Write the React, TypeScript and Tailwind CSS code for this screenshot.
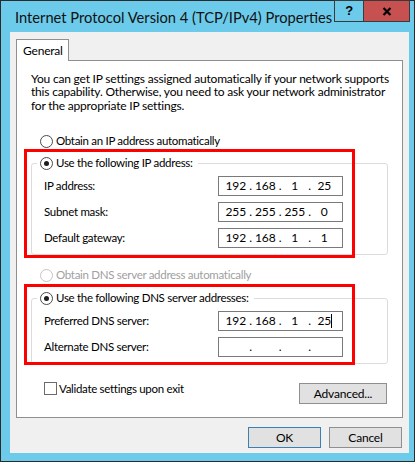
import React from 'react'

function Radio({ checked, disabled }: { checked?: boolean; disabled?: boolean }) {
  return (
    <span
      className={`flex h-[13px] w-[13px] shrink-0 items-center justify-center rounded-full border bg-white ${
        disabled ? 'border-[#c4c4c4]' : 'border-[#4a4a4a]'
      }`}
    >
      {checked && <span className="h-[5px] w-[5px] rounded-full bg-[#1c1c1c]" />}
    </span>
  )
}

function IpBox({ value, caret }: { value?: string[]; caret?: boolean }) {
  const parts = value ?? ['', '', '', '']
  return (
    <div className="flex h-[20px] w-[125px] items-center border border-[#7a7a7a] bg-white pl-[5px] text-[12px] tracking-[-0.2px]">
      {parts.map((p, i) => (
        <React.Fragment key={i}>
          <span className="relative w-[23.5px] text-center">
            {p}
            {caret && i === 3 && <span className="absolute right-[4px] top-[1px] h-[14px] w-px bg-black" />}
          </span>
          {i < 3 && <span className="w-[6px] text-center">.</span>}
        </React.Fragment>
      ))}
    </div>
  )
}

function Row({ label, children }: { label: string; children: React.ReactNode }) {
  return (
    <div className="flex h-[20px] items-center">
      <span className="w-[174px]">{label}</span>
      {children}
    </div>
  )
}

function Btn({ children, primary, className = '' }: { children: React.ReactNode; primary?: boolean; className?: string }) {
  return (
    <div
      className={`flex h-[21px] items-center justify-center border bg-[#e1e1e1] ${
        primary ? 'border-[#3c7fb1]' : 'border-[#8f8f8f]'
      } ${className}`}
    >
      {children}
    </div>
  )
}

export default function App() {
  return (
    <div className="flex h-[462px] w-[415px] flex-col border border-[#2b2b2b] bg-[#6ccbea] font-['Lato',sans-serif] text-[11.5px] leading-[16px] tracking-[-0.3px] text-black">
      {/* title bar */}
      <div className="flex h-[31px] shrink-0">
        <div className="whitespace-nowrap pl-[14px] pt-[6px] text-[14.7px] leading-[20px] tracking-normal text-[#111]">
          Internet Protocol Version 4 (TCP/IPv4) Properties
        </div>
        <div className="ml-auto mr-[4px] -mt-px flex self-start">
          <div className="flex h-[22px] w-[29px] items-center justify-center border border-r-0 border-[#3a3a3a] font-['Liberation_Sans',sans-serif] text-[13px] font-bold">
            ?
          </div>
          <div className="flex h-[22px] w-[47px] items-center justify-center border border-[#3a3a3a] bg-[#c75050]">
            <svg width="10" height="9" viewBox="0 0 10 9">
              <path d="M1.5 1 L8.5 8 M8.5 1 L1.5 8" stroke="#000" strokeWidth="2.2" />
            </svg>
          </div>
        </div>
      </div>

      {/* client */}
      <div className="ml-[9px] mr-[5px] flex h-[421px] flex-col bg-[#f0f0f0] pt-[7px]">
        <div className="relative z-10 -mb-px ml-[6px] flex h-[22px] w-[53px] items-center border border-b-0 border-[#8e8f8f] bg-white pl-[6px] text-[12px] tracking-[-0.2px]">
          General
        </div>
        <div className="relative ml-[6px] flex h-[358px] w-[387px] flex-col border border-[#8e8f8f] bg-white pt-[11px]">
          <p className="whitespace-nowrap pl-[14px] text-[12px] leading-[13.4px] tracking-[-0.2px]">
            You can get IP settings assigned automatically if your network supports
            <br />
            this capability. Otherwise, you need to ask your network administrator
            <br />
            for the appropriate IP settings.
          </p>

          <div className="ml-[23px] mt-[21px] flex h-[16px] items-center gap-[3px]">
            <Radio />
            <span>Obtain an IP address automatically</span>
          </div>

          <fieldset className="ml-[14px] mt-[6px] w-[357px] rounded-[3px] border border-[#dcdcdc] px-[5px] pb-[6px]">
            <legend className="flex h-[16px] items-center gap-[3px] pl-[3px] pr-[5px]">
              <Radio checked />
              <span>Use the following IP address:</span>
            </legend>
            <div className="mt-[5px] flex flex-col gap-[6px] pl-[7px]">
              <Row label="IP address:">
                <IpBox value={['192', '168', '1', '25']} />
              </Row>
              <Row label="Subnet mask:">
                <IpBox value={['255', '255', '255', '0']} />
              </Row>
              <Row label="Default gateway:">
                <IpBox value={['192', '168', '1', '1']} />
              </Row>
            </div>
          </fieldset>

          <div className="ml-[23px] mt-[12px] flex h-[16px] items-center gap-[3px] text-[#a0a0a0]">
            <Radio disabled />
            <span>Obtain DNS server address automatically</span>
          </div>

          <fieldset className="ml-[14px] mt-[7px] w-[357px] rounded-[3px] border border-[#dcdcdc] px-[5px] pb-[6px]">
            <legend className="flex h-[16px] items-center gap-[3px] pl-[3px] pr-[5px]">
              <Radio checked />
              <span>Use the following DNS server addresses:</span>
            </legend>
            <div className="mt-[5px] flex flex-col gap-[6px] pl-[7px]">
              <Row label="Preferred DNS server:">
                <IpBox value={['192', '168', '1', '25']} caret />
              </Row>
              <Row label="Alternate DNS server:">
                <IpBox />
              </Row>
            </div>
          </fieldset>

          <div className="mt-[18px] flex items-start">
            <div className="ml-[27px] flex h-[13px] items-center gap-[2px]">
              <span className="h-[13px] w-[13px] border border-[#6a6a6a] bg-white" />
              <span>Validate settings upon exit</span>
            </div>
            <Btn className="ml-auto mr-[15px] mt-px w-[88px] text-[12px] tracking-[-0.2px]">Advanced...</Btn>
          </div>

          {/* annotation boxes drawn over the dialog */}
          <div className="pointer-events-none absolute left-[7px] top-[88px] h-[109px] w-[331px] border-[3px] border-[#ff0000]" />
          <div className="pointer-events-none absolute left-[7px] top-[223px] h-[81px] w-[331px] border-[3px] border-[#ff0000]" />
        </div>

        <div className="mt-[9px] flex justify-end gap-[8px] pr-[7px] text-[12px] tracking-[-0.2px]">
          <Btn primary className="w-[73px]">OK</Btn>
          <Btn className="w-[73px]">Cancel</Btn>
        </div>
      </div>
    </div>
  )
}
